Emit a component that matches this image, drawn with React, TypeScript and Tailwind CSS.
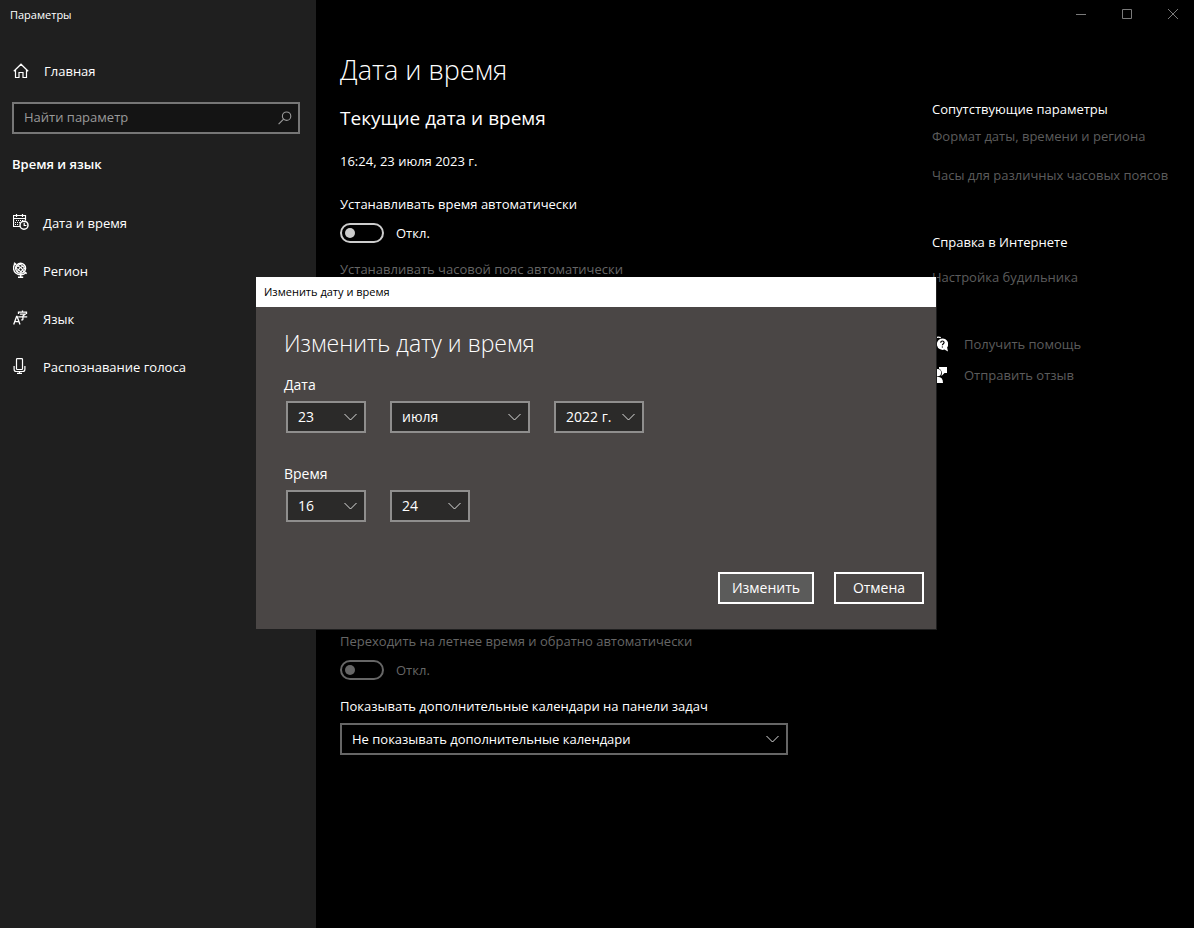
import React, { useState } from 'react';

type IconProps = { className?: string };

const HomeIcon = ({ className }: IconProps) => (
  <svg className={className} width="16" height="16" viewBox="0 0 16 16" fill="none" stroke="currentColor" strokeWidth="1.2" aria-hidden="true">
    <path d="M0.8 8.2 8 1.2l7.2 7M2.5 6.8v7.700h3.500V9.500h4v5h3.500V6.800" />
  </svg>
);

const CalendarClockIcon = () => (
  <svg width="16" height="16" viewBox="0 0 16 16" fill="none" stroke="currentColor" aria-hidden="true">
    <path d="M7 12.500H.5v-11h12v5M0.500 4.500h12M3.500 0v3M9.500 0v3" strokeWidth="1.200" />
    <path d="M3 6.500h1M5 6.500h1M7 6.500h1M9 6.500h1M2 8.500h1M4 8.500h1M6 8.500h1M2 10.500h1M4 10.500h1" strokeWidth="1.200" />
    <circle cx="11" cy="11.200" r="4" strokeWidth="1.500" />
    <path d="M11.200 8.700v2.800h2.200" strokeWidth="1.200" />
  </svg>
);

const GlobeIcon = () => (
  <svg width="16" height="16" viewBox="0 0 16 16" fill="none" stroke="currentColor" strokeWidth="1.400" aria-hidden="true">
    <circle cx="7.600" cy="6.200" r="5" />
    <path d="M3.200 3.800c3 .2 6.800 3 7.700 6.200M5.500 1.800c3 .8 5.500 3.200 6.600 5.800M2.600 6.500c2.200.3 4.500 2 5.500 4.300M11.800 3.700c-3 .5-6.500 3-7.500 6.300M9.500 1.600C6.800 2 3.800 4.300 2.700 6.500M12.600 6c-1.800.4-4 2.300-4.800 5" strokeWidth="1.100" />
    <path d="M2.300 1.300C-.2 4.200 0 8.500 2.800 11c2.800 2.400 7 2.400 9.800 0M1 .8l2.200 1.800M11.500 9.700l2.200 1.900M7.700 12.800v2.500M5 15.300h5.200" />
  </svg>
);

const LanguageIcon = () => (
  <svg width="16" height="16" viewBox="0 0 16 16" fill="none" stroke="currentColor" strokeWidth="1.300" aria-hidden="true">
    <path d="M0.700 14.500 3.600 6.500h.5L7 14.500M1.800 11.700h4.100" />
    <path d="M9.500 .4v1.700M5.500 4V2.200h8V4M6.900 4.200h5.300L9.900 6v3.200q0 .8-1.700.7M5.200 6.900h9" />
  </svg>
);

const MicIcon = () => (
  <svg width="16" height="16" viewBox="0 0 16 16" fill="none" stroke="currentColor" strokeWidth="1.200" aria-hidden="true">
    <rect x="3.500" y="0.600" width="6" height="10.900" rx="0.800" />
    <path d="M1.100 8v3.200q0 2.300 2.200 2.300h6.400q2.200 0 2.200-2.300V8M6.500 13.400v2.200M4 15.400h5" />
  </svg>
);

const SearchIcon = () => (
  <svg width="14" height="14" viewBox="0 0 14 14" fill="none" stroke="currentColor" strokeWidth="1.100" aria-hidden="true">
    <circle cx="8.600" cy="5.200" r="4.200" />
    <path d="M5.600 8.200.6 13.200" />
  </svg>
);

const HelpIcon = () => (
  <svg width="16" height="16" viewBox="0 0 16 16" aria-hidden="true">
    <path d="M1 6A5.500 5.500 0 0 1 8.800 1.700" fill="none" stroke="currentColor" strokeWidth="1.300" />
    <path d="M10.400 2.500a5.700 5.700 0 1 0 2 11.100l3.600 1.900-.9-4A5.700 5.700 0 0 0 10.400 2.500Z" fill="currentColor" />
    <path d="M8.700 6.700q.1-1.700 1.700-1.700t1.700 1.500c0 1.200-1.700 1.200-1.700 2.800M10.400 10.400v1.200" fill="none" stroke="#000" strokeWidth="1.200" />
  </svg>
);

const FeedbackIcon = () => (
  <svg width="16" height="16" viewBox="0 0 16 16" fill="currentColor" aria-hidden="true">
    <path d="M7 0h8v6h-2.500L9.500 9V6H7Z" />
    <circle cx="5.500" cy="5.700" r="4.300" fill="#000" />
    <circle cx="5.500" cy="5.700" r="3.600" />
    <path d="M0 16q0-6.200 5.500-6.200T11 16Z" />
  </svg>
);

const Chevron = ({ className }: IconProps) => (
  <svg className={className} width="13" height="8" viewBox="0 0 13 8" fill="none" stroke="currentColor" aria-hidden="true">
    <path d="M0.500 1 6.500 7l6-6" />
  </svg>
);

type PickerProps = {
  id: string;
  value: string;
  width: string;
  tone: string;
  labelledBy: string;
};

const Picker = ({ id, value, width, tone, labelledBy }: PickerProps) => (
  <div className={`grid h-8 items-center ${width}`}>
    <select
      id={id}
      aria-labelledby={labelledBy}
      defaultValue={value}
      className={`col-start-1 row-start-1 h-8 w-full appearance-none border-2 pl-2.5 text-white outline-none ${tone}`}
    >
      <option>{value}</option>
    </select>
    <Chevron className="pointer-events-none col-start-1 row-start-1 mr-[9px] justify-self-end text-[#dcdcdc]" />
  </div>
);

const Toggle = ({ id, label, disabled = false }: { id: string; label: string; disabled?: boolean }) => {
  const [on, setOn] = useState(false);
  return (
    <div className={disabled ? 'text-[#666666]' : 'text-white'}>
      <label htmlFor={id} className="block">{label}</label>
      <div className="mt-[9px] flex h-5 items-center gap-3">
        <input
          id={id}
          type="checkbox"
          role="switch"
          disabled={disabled}
          checked={on}
          onChange={(e) => setOn(e.target.checked)}
          className={`flex h-5 w-11 appearance-none items-center rounded-full border-2 px-[3px] before:size-2.5 before:rounded-full checked:justify-end ${
            disabled ? 'border-[#666666] before:bg-[#666666]' : 'border-[#cccccc] before:bg-[#cccccc]'
          }`}
        />
        <span>{on ? 'Вкл.' : 'Откл.'}</span>
      </div>
    </div>
  );
};

const navItems = [
  { label: 'Дата и время', Icon: CalendarClockIcon },
  { label: 'Регион', Icon: GlobeIcon },
  { label: 'Язык', Icon: LanguageIcon },
  { label: 'Распознавание голоса', Icon: MicIcon },
];

const Sidebar = () => (
  <aside className="w-[316px] shrink-0 bg-[#1f1f1f]">
    <div className="px-2.5 pt-1.5 text-[11px] leading-[18px]">Параметры</div>
    <a href="#home" className="mt-[37px] flex h-5 items-center gap-[15px] pl-[13px]">
      <HomeIcon />
      Главная
    </a>
    <form className="mt-[21px] ml-3 mr-4 flex h-8 items-center border-2 border-[#767676] bg-[#141414] pr-1.5 text-[#9a9a9a]">
      <input
        type="search"
        aria-label="Найти параметр"
        placeholder="Найти параметр"
        className="min-w-0 flex-1 bg-transparent pb-0.5 pl-2.5 outline-none placeholder:text-[#9a9a9a]"
      />
      <button type="button" aria-label="Найти параметр">
        <SearchIcon />
      </button>
    </form>
    <h2 className="mt-5 pl-3 font-semibold">Время и язык</h2>
    <nav className="mt-[25px]">
      {navItems.map(({ label, Icon }) => (
        <a key={label} href="#section" className="flex h-12 items-center gap-[14px] pl-[13px]">
          <span className="pb-0.5"><Icon /></span>
          {label}
        </a>
      ))}
    </nav>
  </aside>
);

const WindowControls = () => (
  <div className="flex h-7 justify-end text-[#7a7a7a]">
    <button type="button" aria-label="Свернуть" className="flex w-[46px] items-center justify-center pl-1">
      <svg width="10" height="10" viewBox="0 0 10 10" stroke="currentColor"><path d="M0 5.500h10" /></svg>
    </button>
    <button type="button" aria-label="Развернуть" className="flex w-[46px] items-center justify-center pl-1">
      <svg width="10" height="10" viewBox="0 0 10 10" fill="none" stroke="currentColor"><path d="M.5.5h9v9h-9z" /></svg>
    </button>
    <button type="button" aria-label="Закрыть" className="flex w-[46px] items-center justify-center pl-1">
      <svg width="10" height="10" viewBox="0 0 10 10" stroke="currentColor"><path d="m0 0 10 10M10 0 0 10" /></svg>
    </button>
  </div>
);

const Related = () => (
  <aside className="w-[262px] shrink-0 pt-[71px] text-[#5c5c5c]">
    <h3 className="text-white">Сопутствующие параметры</h3>
    <a href="#format" className="mt-[7px] block">Формат даты, времени и региона</a>
    <a href="#clocks" className="mt-[19px] block">Часы для различных часовых поясов</a>
    <h3 className="mt-[47px] text-white">Справка в Интернете</h3>
    <a href="#alarm" className="mt-[15px] block">Настройка будильника</a>
    <a href="#help" className="mt-[47px] flex items-center gap-4">
      <span className="text-white"><HelpIcon /></span>
      Получить помощь
    </a>
    <a href="#feedback" className="mt-[11px] flex items-center gap-4">
      <span className="text-white"><FeedbackIcon /></span>
      Отправить отзыв
    </a>
  </aside>
);

const dialogTone = 'border-[#8f8e8d] bg-[#2b2a29] text-sm';

const ChangeDialog = () => (
  <section
    role="dialog"
    aria-labelledby="dialog-title"
    className="absolute top-[277px] left-64 w-[681px] border-r border-b border-[#1f1f1f] bg-[#4a4645] text-sm"
  >
    <div className="h-[30px] bg-white px-2 text-[11px] leading-[30px] text-black">Изменить дату и время</div>
    <div className="pt-5 pr-3 pb-[25px] pl-7">
      <h2 id="dialog-title" className="text-[23px] leading-8 font-light">Изменить дату и время</h2>
      <label id="date-label" htmlFor="day" className="mt-4 block leading-5">Дата</label>
      <div className="mt-[6px] ml-0.5 flex gap-6">
        <Picker id="day" value="23" width="w-20" tone={dialogTone} labelledBy="date-label" />
        <Picker id="month" value="июля" width="w-[140px]" tone={dialogTone} labelledBy="date-label" />
        <Picker id="year" value="2022 г." width="w-[90px]" tone={dialogTone} labelledBy="date-label" />
      </div>
      <label id="time-label" htmlFor="hour" className="mt-[31px] block leading-5">Время</label>
      <div className="mt-[6px] ml-0.5 flex gap-6">
        <Picker id="hour" value="16" width="w-20" tone={dialogTone} labelledBy="time-label" />
        <Picker id="minute" value="24" width="w-20" tone={dialogTone} labelledBy="time-label" />
      </div>
      <div className="mt-[50px] flex justify-end gap-5">
        <button type="button" className="h-8 w-24 border-2 border-white bg-[#5b5b5a]">Изменить</button>
        <button type="button" className="h-8 w-[90px] border-2 border-white">Отмена</button>
      </div>
    </div>
  </section>
);

export default function App() {
  return (
    <div className="relative flex min-h-screen bg-black font-['Open_Sans','Noto_Sans',sans-serif] text-[13px] leading-5 text-white">
      <Sidebar />
      <div className="min-w-0 flex-1">
        <WindowControls />
        <div className="flex pl-6">
          <main className="min-w-0 flex-1 pt-6 pb-10">
            <h1 className="text-[27px] leading-9 font-light">Дата и время</h1>
            <h2 className="mt-4 text-[19px] leading-7">Текущие дата и время</h2>
            <p className="mt-[19px] mb-[23px]">16:24, 23 июля 2023 г.</p>
            <Toggle id="auto-time" label="Устанавливать время автоматически" />
            <p className="mt-4 text-[#666666]">Устанавливать часовой пояс автоматически</p>
            <div className="mt-[352px]">
              <Toggle id="auto-dst" label="Переходить на летнее время и обратно автоматически" disabled />
            </div>
            <label id="calendars-label" htmlFor="calendars" className="mt-4 mb-[7px] block">
              Показывать дополнительные календари на панели задач
            </label>
            <Picker
              id="calendars"
              value="Не показывать дополнительные календари"
              width="max-w-md"
              tone="border-[#666666] bg-black"
              labelledBy="calendars-label"
            />
          </main>
          <Related />
        </div>
      </div>
      <ChangeDialog />
    </div>
  );
}
